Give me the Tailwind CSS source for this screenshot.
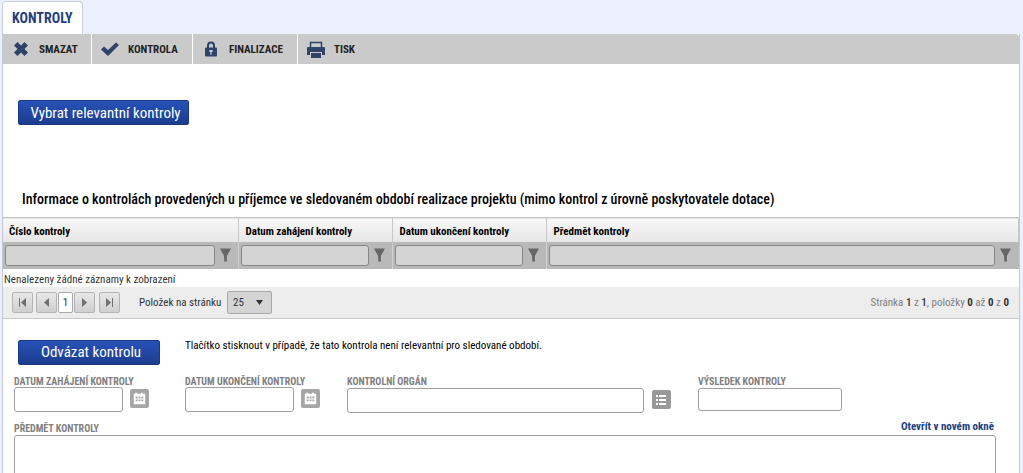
<!DOCTYPE html>
<html lang="cs">
<head>
<meta charset="utf-8">
<title>Kontroly</title>
<script src="https://cdn.jsdelivr.net/npm/@tailwindcss/browser@4"></script>
</head>
<body class="h-screen overflow-hidden bg-[#ecf0fd] pl-[2px] pr-[3px] pt-px font-['Roboto_Condensed','Liberation_Sans_Narrow',Roboto,sans-serif] text-[11px] text-[#333]">
<svg class="hidden" aria-hidden="true">
  <symbol id="funnel" viewBox="0 0 12 14"><path d="M0 0h12L7.500 8v6H4.500V8z" fill="#666"/></symbol>
  <symbol id="calendar" viewBox="0 0 20 20"><path d="M4 5h1.500V4h2v1h4V4h2v1H16v11H4z" fill="#fff"/><path d="M6 8h2v2H6zM9 8h2v2H9zM12 8h2v2h-2zM6 11h2v2H6zM9 11h2v2H9zM12 11h2v2h-2z" fill="#a6a6a6"/></symbol>
</svg>
<header class="flex">
  <h1 class="flex h-[33px] items-center rounded-t border border-b-0 border-[#c9cbd6] bg-white px-[9px] text-sm font-bold text-[#233f80]"><a href="#kontroly">KONTROLY</a></h1>
</header>
<main class="border-x border-[#c5c8dc] bg-white">
  <nav class="flex h-[30px] rounded-tr-sm bg-[#cacaca] font-bold text-[#222]">
    <button class="flex w-[89px] items-center gap-[10px] border-r border-white pl-[10px]">
      <svg class="size-4" viewBox="0 0 16 16"><path d="M4.500 1 8 4.500 11.500 1 15 4.500 11.500 8 15 11.500 11.500 15 8 11.500 4.500 15 1 11.500 4.500 8 1 4.500z" fill="#2f4368"/></svg><span class="pt-[2px]">SMAZAT</span></button>
    <button class="flex w-[101px] items-center gap-[9px] border-r border-white pl-[9px]">
      <svg class="h-4 w-[18px]" viewBox="0 0 18 16"><path d="M0 8.500 3 5.500l4 3.500L15 1.500 18 4 7 15z" fill="#2f4368"/></svg><span class="pt-[2px]">KONTROLA</span></button>
    <button class="flex w-[105px] items-center gap-[11px] border-r border-white pl-[11px]">
      <svg class="h-4 w-[14px]" viewBox="0 0 14 16"><path d="M4 7V4.500a3 3 0 0 1 6 0V7" fill="none" stroke="#2f4368" stroke-width="2"/><rect x="1" y="6.500" width="12" height="9" rx="1" fill="#2f4368"/><path d="M5.500 9h3v2h-1v3h-1v-3h-1z" fill="#cfd6e2"/></svg><span class="pt-[2px]">FINALIZACE</span></button>
    <button class="flex items-center gap-[9px] pl-[9px]">
      <svg class="h-[17px] w-[18px]" viewBox="0 0 18 17"><path d="M3.500 7V1.500h11V7" fill="#cacaca" stroke="#2f4368" stroke-width="1.500"/><path d="M1 6h16a1 1 0 0 1 1 1v7h-3v-3H3v3H0V7a1 1 0 0 1 1-1z" fill="#2f4368"/><path d="M4 12h10v5H4z" fill="#2f4368"/></svg><span class="pt-[2px]">TISK</span></button>
  </nav>
  <section class="pt-9">
    <button class="ml-[15px] flex h-[25px] w-[171px] items-center justify-center rounded-xs border border-[#1b3a7d] bg-linear-to-b from-[#2752b8] to-[#1c3d8f] pt-px pl-1 text-[15px] whitespace-nowrap text-white">Vybrat relevantní kontroly</button>
    <h2 class="mt-16 mb-2 ml-[19px] text-sm leading-5 font-medium text-black">Informace o kontrolách provedených u příjemce ve sledovaném období realizace projektu (mimo kontrol z úrovně poskytovatele dotace)</h2>
    <table class="w-full table-fixed border-collapse text-left">
      <colgroup><col class="w-[235px]"><col class="w-[154px]"><col class="w-[154px]"><col></colgroup>
      <thead class="text-black">
        <tr class="h-[24px] border-t border-[#c4c4c4] bg-linear-to-b from-[#f8f8f8] to-[#e6e6e6]">
          <th class="border-r border-[#c8c8c8] pt-1 pl-[6px]">Číslo kontroly</th>
          <th class="border-r border-[#c8c8c8] pt-1 pl-[7px]">Datum zahájení kontroly</th>
          <th class="border-r border-[#c8c8c8] pt-1 pl-[7px]">Datum ukončení kontroly</th>
          <th class="border-r border-[#c8c8c8] pt-1 pl-[7px]">Předmět kontroly</th>
        </tr>
        <tr class="h-[27px] bg-[#b9b9b9]">
          <td class="border-r border-[#cfcfcf] pr-[7px] pl-[2px]"><div class="flex items-center gap-[5px]"><input aria-label="Číslo kontroly" class="h-[21px] min-w-0 flex-1 rounded-[3px] border border-[#868686] bg-[#d4d4d4] px-1"><button aria-label="Filtr čísla kontroly"><svg class="h-[14px] w-[11px]"><use href="#funnel"/></svg></button></div></td>
          <td class="border-r border-[#cfcfcf] pr-[7px] pl-[2px]"><div class="flex items-center gap-[5px]"><input aria-label="Datum zahájení kontroly" class="h-[21px] min-w-0 flex-1 rounded-[3px] border border-[#868686] bg-[#d4d4d4] px-1"><button aria-label="Filtr data zahájení"><svg class="h-[14px] w-[11px]"><use href="#funnel"/></svg></button></div></td>
          <td class="border-r border-[#cfcfcf] pr-[7px] pl-[2px]"><div class="flex items-center gap-[5px]"><input aria-label="Datum ukončení kontroly" class="h-[21px] min-w-0 flex-1 rounded-[3px] border border-[#868686] bg-[#d4d4d4] px-1"><button aria-label="Filtr data ukončení"><svg class="h-[14px] w-[11px]"><use href="#funnel"/></svg></button></div></td>
          <td class="pr-2 pl-[2px]"><div class="flex items-center gap-[5px]"><input aria-label="Předmět kontroly" class="h-[21px] min-w-0 flex-1 rounded-[3px] border border-[#868686] bg-[#d4d4d4] px-1"><button aria-label="Filtr předmětu kontroly"><svg class="h-[14px] w-[11px]"><use href="#funnel"/></svg></button></div></td>
        </tr>
      </thead>
      <tbody><tr class="h-[18px]"><td colspan="4" class="pt-[3px] pl-px leading-[15px]">Nenalezeny žádné záznamy k zobrazení</td></tr></tbody>
    </table>
    <div class="flex h-8 items-center border-b border-[#c8c8c8] bg-[#ededed] pr-[10px] pl-[9px]">
      <button aria-label="První stránka" class="flex h-[21px] w-[21px] items-center justify-center rounded-xs border border-[#b4b4b4] bg-linear-to-b from-[#e8e8e8] to-[#cfcfcf]"><svg class="size-[9px]" viewBox="0 0 9 9"><path d="M1 0h1v9H1zM8 0v9L3 4.500z" fill="#707070"/></svg></button>
      <button aria-label="Předchozí stránka" class="ml-[3px] flex h-[21px] w-[21px] items-center justify-center rounded-xs border border-[#b4b4b4] bg-linear-to-b from-[#e8e8e8] to-[#cfcfcf]"><svg class="size-[9px]" viewBox="0 0 9 9"><path d="M7 0v9L2 4.500z" fill="#707070"/></svg></button>
      <button class="ml-px h-[21px] w-[15px] rounded-xs border border-[#aaa] bg-white pt-[2px] text-center">1</button>
      <button aria-label="Další stránka" class="ml-px flex h-[21px] w-[21px] items-center justify-center rounded-xs border border-[#b4b4b4] bg-linear-to-b from-[#e8e8e8] to-[#cfcfcf]"><svg class="size-[9px]" viewBox="0 0 9 9"><path d="M2 0v9l5-4.500z" fill="#707070"/></svg></button>
      <button aria-label="Poslední stránka" class="ml-1 flex h-[21px] w-[21px] items-center justify-center rounded-xs border border-[#b4b4b4] bg-linear-to-b from-[#e8e8e8] to-[#cfcfcf]"><svg class="size-[9px]" viewBox="0 0 9 9"><path d="M7 0h1v9H7zM1 0v9l5-4.500z" fill="#707070"/></svg></button>
      <label for="size" class="ml-[19px] w-[88px] pt-[3px] whitespace-nowrap">Položek na stránku</label>
      <div class="relative">
        <select id="size" class="block h-[23px] w-[45px] appearance-none rounded-xs border border-[#aaa] bg-[#d4d4d4] pt-[2px] pl-[5px]"><option>25</option></select>
        <svg class="pointer-events-none absolute top-[9px] right-[9px] h-[5px] w-[7px]" viewBox="0 0 7 5"><path d="M0 0h7L3.500 5z" fill="#333"/></svg>
      </div>
      <p class="ml-auto pt-[3px] text-[#808080]">Stránka <b class="font-medium text-[#333]">1</b> z <b class="font-medium text-[#333]">1</b>, položky <b class="text-[#333]">0</b> až <b class="text-[#333]">0</b> z <b class="text-[#333]">0</b></p>
    </div>
  </section>
  <form class="pt-[21px] pr-[23px] pl-[11px]">
    <div class="flex items-start">
      <button type="button" class="ml-1 flex h-[25px] w-[142px] items-center justify-center rounded-xs border border-[#1b3a7d] bg-linear-to-b from-[#2752b8] to-[#1c3d8f] pt-px pl-1 text-[15px] whitespace-nowrap text-white">Odvázat kontrolu</button>
      <p class="ml-[25px] leading-3 text-black">Tlačítko stisknout v případě, že tato kontrola není relevantní pro sledované období.</p>
    </div>
    <div class="mt-[10px] grid grid-cols-[171px_162px_351px_1fr] items-start">
      <div>
        <label for="zahajeni" class="block h-3 text-[10px] leading-[14px] font-bold whitespace-nowrap text-[#808080]">DATUM ZAHÁJENÍ KONTROLY</label>
        <div class="flex items-start gap-[7px]"><input id="zahajeni" class="h-[25px] w-[109px] rounded-[3px] border border-[#9f9f9f] bg-white px-1"><button type="button" aria-label="Vybrat datum zahájení" class="mt-[2px] rounded-xs bg-[#a6a6a6]"><svg class="size-[19px]"><use href="#calendar"/></svg></button></div>
      </div>
      <div>
        <label for="ukonceni" class="block h-3 text-[10px] leading-[14px] font-bold whitespace-nowrap text-[#808080]">DATUM UKONČENÍ KONTROLY</label>
        <div class="flex items-start gap-[7px]"><input id="ukonceni" class="h-[25px] w-[109px] rounded-[3px] border border-[#9f9f9f] bg-white px-1"><button type="button" aria-label="Vybrat datum ukončení" class="mt-[2px] rounded-xs bg-[#a6a6a6]"><svg class="size-[19px]"><use href="#calendar"/></svg></button></div>
      </div>
      <div>
        <label for="organ" class="block h-[13px] text-[10px] leading-[14px] font-bold text-[#808080]">KONTROLNÍ ORGÁN</label>
        <div class="flex items-start gap-2"><input id="organ" class="h-[25px] w-[297px] rounded-[3px] border border-[#9f9f9f] bg-white px-1"><button type="button" aria-label="Vybrat kontrolní orgán" class="mt-[2px] rounded-xs bg-[#999]"><svg class="size-[19px]" viewBox="0 0 19 19"><path d="M4 5h2v2H4zM7 5h7v2H7zM4 9h2v2H4zM7 9h7v2H7zM4 13h2v2H4zM7 13h7v2H7z" fill="#fff"/></svg></button></div>
      </div>
      <div>
        <label for="vysledek" class="block h-[13px] text-[10px] leading-[14px] font-bold text-[#808080]">VÝSLEDEK KONTROLY</label>
        <input id="vysledek" class="h-[23px] w-[144px] rounded-[3px] border border-[#9f9f9f] bg-white px-1">
      </div>
    </div>
    <div class="mt-1 flex h-[18px] justify-between">
      <label for="predmet" class="pt-[6px] text-[10px] leading-3 font-bold text-[#808080]">PŘEDMĚT KONTROLY</label>
      <a href="#okno" class="mr-[2px] pt-[2px] leading-4 font-bold text-[#20407f]">Otevřít v novém okně</a>
    </div>
    <textarea id="predmet" class="block h-24 w-full resize-none rounded-[3px] border border-[#9f9f9f] bg-white p-1"></textarea>
  </form>
</main>
</body>
</html>
